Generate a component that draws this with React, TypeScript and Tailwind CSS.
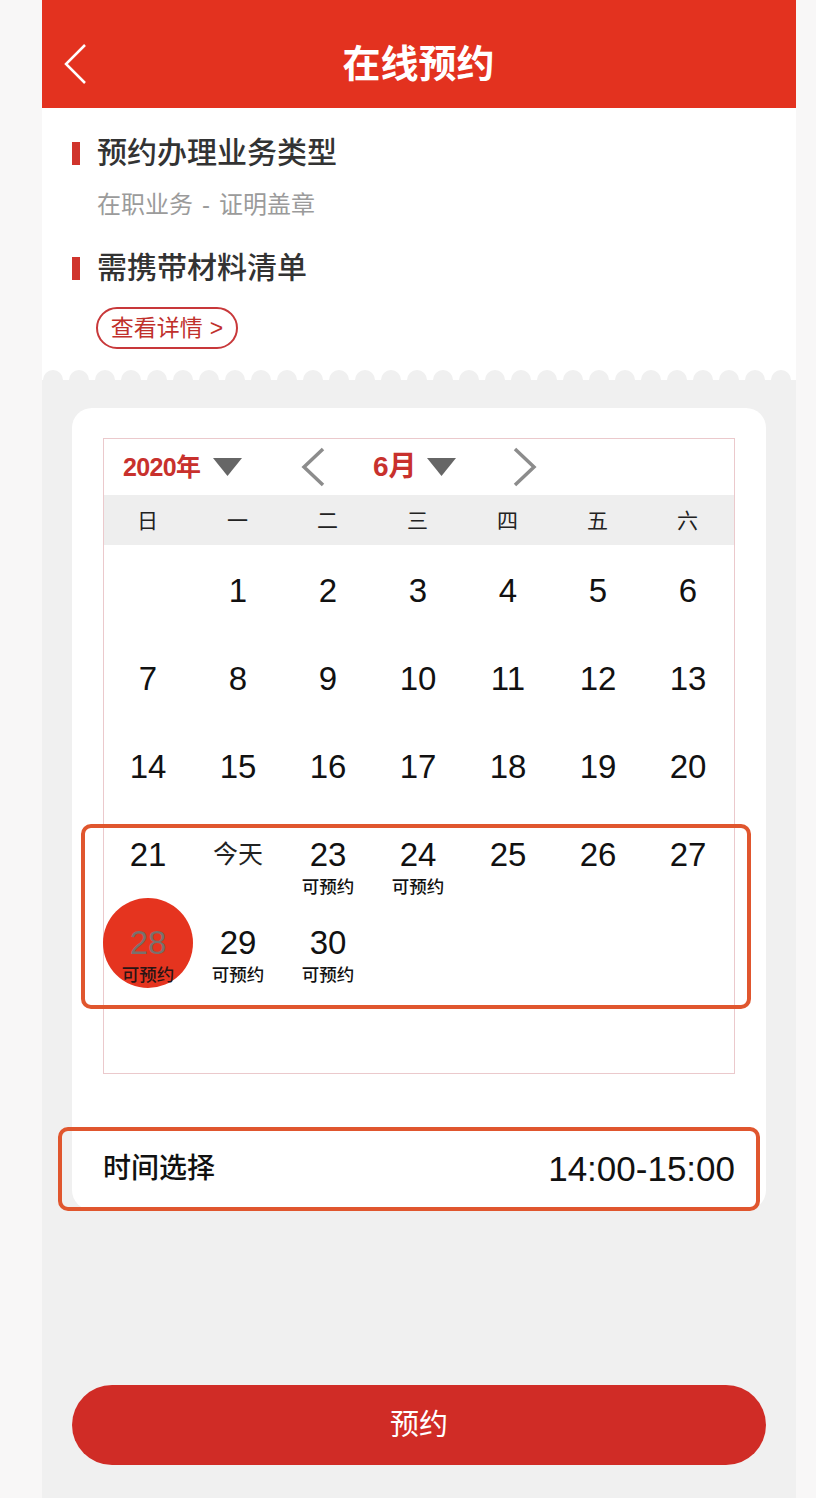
import React from "react";

const Tri = ({ className = "" }: { className?: string }) => (
  <svg width="29" height="18" viewBox="0 0 29 18" className={className}>
    <polygon points="0,0 29,0 14.5,18" fill="#666666" />
  </svg>
);

const Chev = ({ dir, className = "" }: { dir: "l" | "r"; className?: string }) => (
  <svg width="26" height="40" viewBox="0 0 26 40" className={className}>
    <polyline
      points={dir === "l" ? "23,2 4,20 23,38" : "3,2 22,20 3,38"}
      fill="none"
      stroke="#8c8c8c"
      strokeWidth="3.5"
    />
  </svg>
);

type Cell = { n?: number };

export default function App() {
  const cells: Cell[] = [];
  cells.push({});
  for (let i = 1; i <= 30; i++) cells.push({ n: i });
  while (cells.length < 42) cells.push({});
  const avail = [23, 24, 28, 29, 30];
  const weekdays = ["日", "一", "二", "三", "四", "五", "六"];

  return (
    <div className="min-h-[1498px] bg-[#f8f7f7] pl-[42px] pr-[20px] font-['Liberation_Sans','Noto_Sans_CJK_SC',sans-serif]">
      <div className="w-[754px] min-h-[1498px] bg-[#f0f0f0] flex flex-col">
        {/* Header */}
        <div className="h-[108px] pt-[20px] bg-[#e3321f] flex items-center relative">
          <svg width="24" height="42" viewBox="0 0 24 42" className="ml-[21px]">
            <polyline points="22,2 3,21 22,40" fill="none" stroke="#ffffff" strokeWidth="2.5" />
          </svg>
          <div className="flex-1 text-center text-white text-[38px] font-bold pr-[46px] leading-none">
            在线预约
          </div>
        </div>

        {/* Info section */}
        <div className="bg-white pt-[25px] pb-[21px] pl-[30px]">
          <div className="h-[40px] flex items-center">
            <div className="w-[8px] h-[23px] bg-[#d0342c]" />
            <div className="ml-[17px] text-[30px] font-medium text-[#333333] leading-none">预约办理业务类型</div>
          </div>
          <div className="mt-[16px] h-[32px] flex items-center pl-[25px] text-[24px] text-[#9b9b9b] leading-none">
            在职业务<span className="mx-[9px]">-</span>证明盖章
          </div>
          <div className="mt-[27px] h-[40px] flex items-center">
            <div className="w-[8px] h-[23px] bg-[#d0342c]" />
            <div className="ml-[17px] text-[30px] font-medium text-[#333333] leading-none">需携带材料清单</div>
          </div>
          <div className="mt-[19px] ml-[24px] w-[142px] h-[42px] rounded-full border-2 border-[#c8383a] flex items-center justify-center text-[23px] text-[#c0302c] leading-none">
            查看详情<span className="ml-[7px]">&gt;</span>
          </div>
        </div>

        {/* Scallops */}
        <div className="h-[10px] bg-white overflow-hidden flex items-start gap-[6px] pl-[1px]">
          {Array.from({ length: 30 }).map((_, i) => (
            <div key={i} className="w-[20px] h-[20px] rounded-full bg-[#f0f0f0] shrink-0" />
          ))}
        </div>

        {/* Card */}
        <div className="mt-[28px] mx-[30px] bg-white rounded-[20px] pt-[30px] px-[31px]">
          <div className="relative border border-[#ebc9cc]">
            <div className="h-[56px] flex items-center pl-[19px]">
              <span className="w-[81px] whitespace-nowrap text-[25px] font-bold text-[#c8312d] tracking-tight leading-none">2020年</span>
              <Tri className="ml-[9px]" />
              <Chev dir="l" className="ml-[58px]" />
              <span className="ml-[47px] w-[45px] whitespace-nowrap text-[28px] font-bold text-[#c8312d] leading-none">6月</span>
              <Tri className="ml-[9px]" />
              <Chev dir="r" className="ml-[56px]" />
            </div>
            <div className="h-[50px] bg-[#eeeeee] grid grid-cols-7 items-center">
              {weekdays.map((w) => (
                <div key={w} className="text-center text-[21px] text-[#222222] leading-none pr-[3px]">
                  {w}
                </div>
              ))}
            </div>
            <div className="grid grid-cols-7">
              {cells.map((c, i) => {
                const sel = c.n === 28;
                const isAvail = c.n !== undefined && avail.includes(c.n);
                const today = c.n === 22;
                return (
                  <div key={i} className="h-[88px] relative flex flex-col items-center pr-[2px]">
                    {sel && (
                      <div className="absolute top-[1px] left-[44px] -translate-x-1/2 w-[90px] h-[90px] rounded-full bg-[#e5341f]" />
                    )}
                    {c.n !== undefined && (
                      <>
                        <div
                          className={`relative mt-[27px] h-[36px] flex items-center leading-none ${
                            today ? "text-[25px] text-[#222222]" : "text-[33px]"
                          } ${sel ? "text-[#7a706c]" : today ? "" : "text-[#111111]"}`}
                        >
                          {today ? "今天" : c.n}
                        </div>
                        {isAvail && (
                          <div
                            className={`relative mt-[6px] text-[17.5px] font-medium leading-[18px] ${
                              sel ? "text-[#2a1414]" : "text-[#111111]"
                            }`}
                          >
                            可预约
                          </div>
                        )}
                      </>
                    )}
                  </div>
                );
              })}
            </div>
            <div className="absolute left-[-23px] top-[385px] w-[670px] h-[185px] border-4 border-[#e0562e] rounded-[10px] pointer-events-none" />
          </div>

          {/* Time row */}
          <div className="relative mt-[53px] h-[83px] flex items-center justify-between">
            <div className="text-[28px] font-medium text-[#111111] leading-none">时间选择</div>
            <div className="text-[35px] text-[#111111] leading-none">14:00-15:00</div>
            <div className="absolute left-[-45px] right-[-25px] top-0 bottom-[-1px] border-4 border-[#e0562e] rounded-[10px] pointer-events-none" />
          </div>
        </div>

        {/* Button */}
        <div className="mt-[175px] mx-[30px] h-[80px] rounded-full bg-[#d02c26] flex items-center justify-center text-white text-[29px] leading-none">
          预约
        </div>
      </div>
    </div>
  );
}
